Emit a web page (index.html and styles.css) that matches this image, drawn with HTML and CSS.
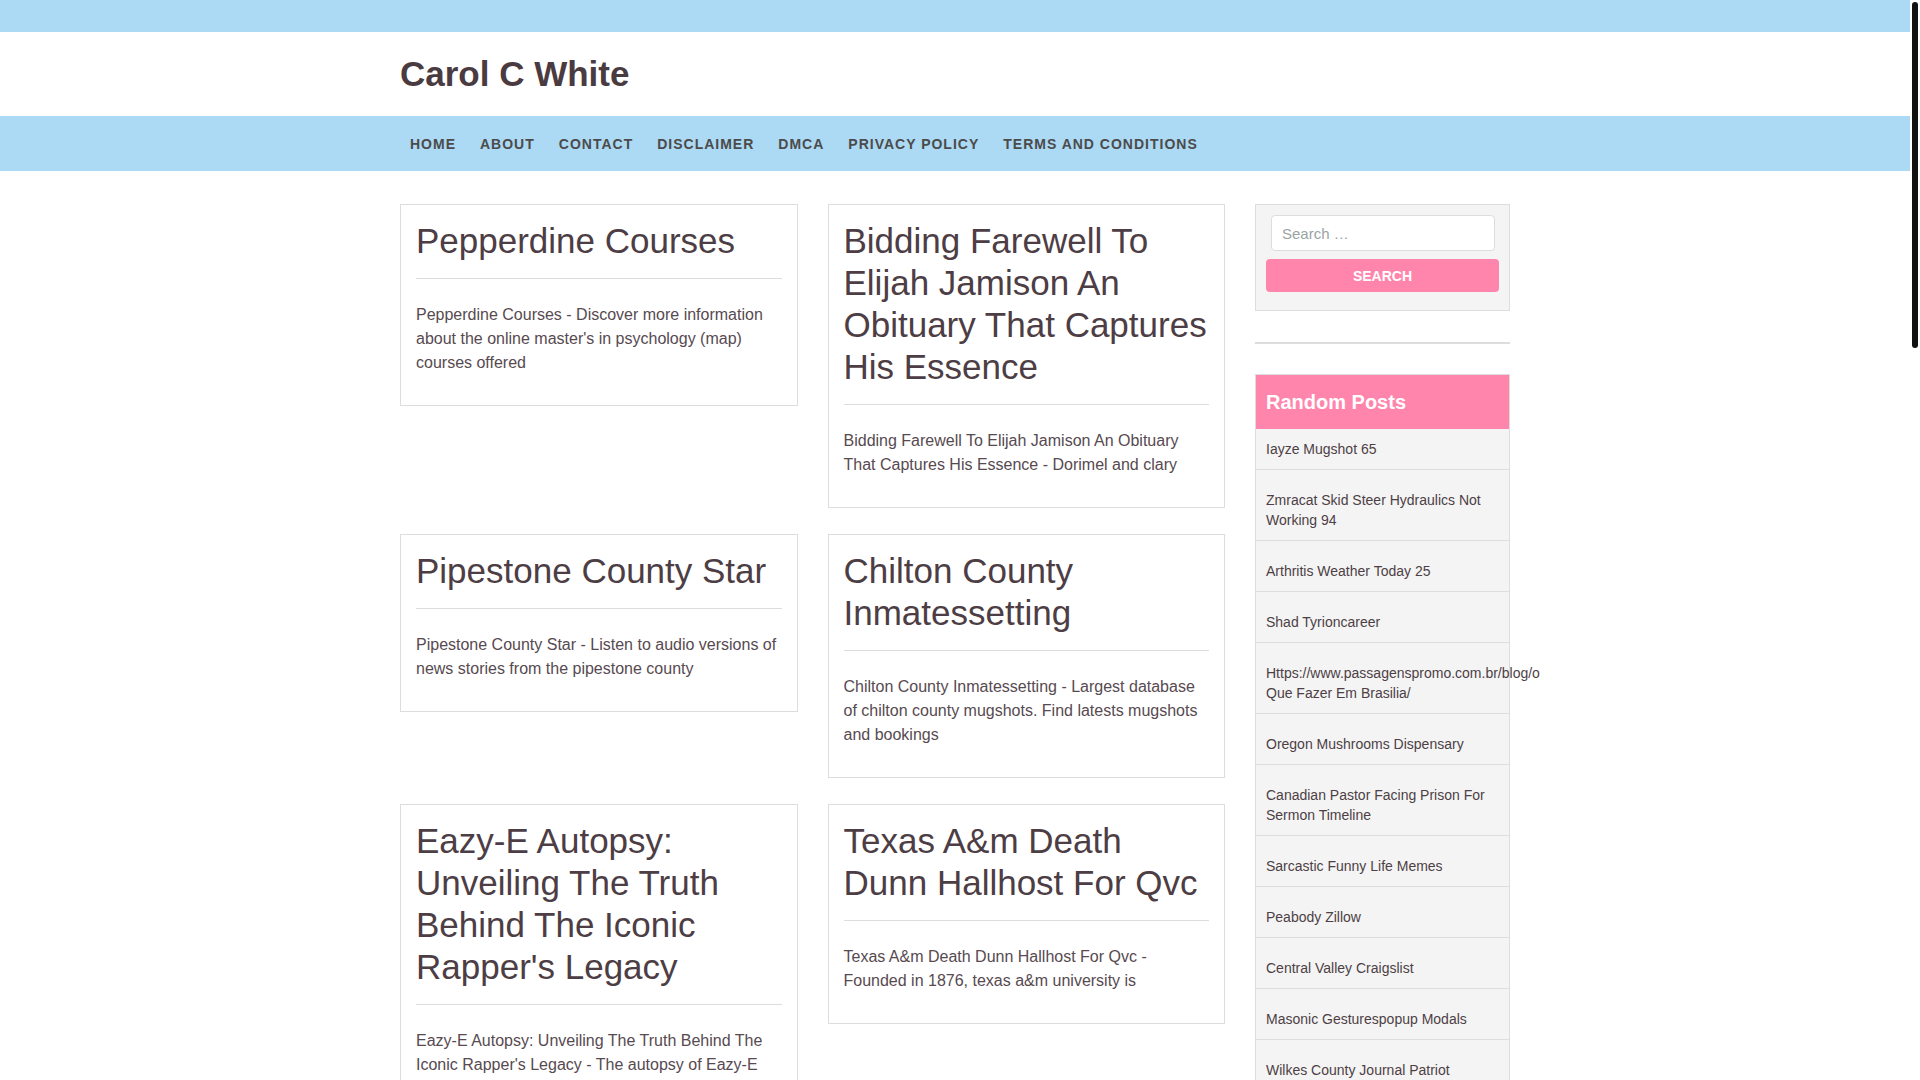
FILE: index.html
```html
<!DOCTYPE html>
<html lang="en">
<head>
<meta charset="utf-8">
<title>Carol C White</title>
<link rel="stylesheet" href="styles.css">
</head>
<body>
<div class="page">
<div class="topbar"></div>
<header class="site-header">
  <div class="container">
    <h1 class="site-title">Carol C White</h1>
  </div>
</header>
<nav class="main-nav">
  <div class="container">
    <ul class="menu">
      <li><a href="#">Home</a></li>
      <li><a href="#">About</a></li>
      <li><a href="#">Contact</a></li>
      <li><a href="#">Disclaimer</a></li>
      <li><a href="#">DMCA</a></li>
      <li><a href="#">Privacy Policy</a></li>
      <li><a href="#">Terms and Conditions</a></li>
    </ul>
  </div>
</nav>
<div class="site-content container">
  <main class="posts">
    <article class="card">
      <h2 class="card-title">Pepperdine Courses</h2>
      <hr class="card-sep">
      <p class="card-text">Pepperdine Courses - Discover more information about the online master's in psychology (map) courses offered</p>
    </article>
    <article class="card">
      <h2 class="card-title">Bidding Farewell To Elijah Jamison An Obituary That Captures His Essence</h2>
      <hr class="card-sep">
      <p class="card-text">Bidding Farewell To Elijah Jamison An Obituary That Captures His Essence - Dorimel and clary</p>
    </article>
    <article class="card">
      <h2 class="card-title">Pipestone County Star</h2>
      <hr class="card-sep">
      <p class="card-text">Pipestone County Star - Listen to audio versions of news stories from the pipestone county</p>
    </article>
    <article class="card">
      <h2 class="card-title">Chilton County Inmatessetting</h2>
      <hr class="card-sep">
      <p class="card-text">Chilton County Inmatessetting - Largest database of chilton county mugshots. Find latests mugshots and bookings</p>
    </article>
    <article class="card">
      <h2 class="card-title">Eazy-E Autopsy: Unveiling The Truth Behind The Iconic Rapper's Legacy</h2>
      <hr class="card-sep">
      <p class="card-text">Eazy-E Autopsy: Unveiling The Truth Behind The Iconic Rapper's Legacy - The autopsy of Eazy-E revealed the cause of his death</p>
    </article>
    <article class="card">
      <h2 class="card-title">Texas A&amp;m Death Dunn Hallhost For Qvc</h2>
      <hr class="card-sep">
      <p class="card-text">Texas A&amp;m Death Dunn Hallhost For Qvc - Founded in 1876, texas a&amp;m university is</p>
    </article>
  </main>
  <aside class="sidebar">
    <section class="widget search-widget">
      <form class="search-form">
        <input class="search-field" type="search" placeholder="Search …">
        <button class="search-submit" type="button">Search</button>
      </form>
    </section>
    <hr class="widget-sep">
    <section class="widget random-posts">
      <h3 class="widget-title">Random Posts</h3>
      <ul class="post-list">
        <li><a href="#">Iayze Mugshot 65</a></li>
        <li><a href="#">Zmracat Skid Steer Hydraulics Not Working 94</a></li>
        <li><a href="#">Arthritis Weather Today 25</a></li>
        <li><a href="#">Shad Tyrioncareer</a></li>
        <li><a href="#">Https://www.passagenspromo.com.br/blog/o Que Fazer Em Brasilia/</a></li>
        <li><a href="#">Oregon Mushrooms Dispensary</a></li>
        <li><a href="#">Canadian Pastor Facing Prison For Sermon Timeline</a></li>
        <li><a href="#">Sarcastic Funny Life Memes</a></li>
        <li><a href="#">Peabody Zillow</a></li>
        <li><a href="#">Central Valley Craigslist</a></li>
        <li><a href="#">Masonic Gesturespopup Modals</a></li>
        <li><a href="#">Wilkes County Journal Patriot</a></li>
      </ul>
    </section>
  </aside>
</div>
</div>
<div class="scroll-thumb"></div>
</body>
</html>
```

FILE: styles.css
```css
html, body {
  margin: 0;
  padding: 0;
}

body {
  font-family: "Liberation Sans", Arial, sans-serif;
  color: #574a50;
  background: #fff;
}

.page {
  margin-right: 10px;
}

.scroll-thumb {
  position: fixed;
  top: 2px;
  right: 2px;
  width: 6px;
  height: 346px;
  border-radius: 3px;
  background: #111;
}

.container {
  width: 1110px;
  margin: 0 auto;
}

.topbar {
  height: 32px;
  background: #acd9f4;
}

.site-header {
  height: 84px;
  display: flex;
  align-items: center;
}

.site-title {
  margin: 0;
  font-size: 35px;
  line-height: 40px;
  font-weight: 700;
  color: #4a3b41;
}

.main-nav {
  height: 55px;
  background: #acd9f4;
}

.menu {
  list-style: none;
  margin: 0 0 0 -2px;
  padding: 0;
  display: flex;
}

.menu a {
  display: block;
  padding: 0 12px;
  line-height: 56px;
  font-size: 14px;
  font-weight: 700;
  letter-spacing: 1px;
  text-transform: uppercase;
  color: #4b4b4b;
  text-decoration: none;
}

.site-content {
  display: flex;
  align-items: flex-start;
  gap: 30px;
  padding-top: 33px;
  padding-bottom: 40px;
}

.posts {
  width: 825px;
  display: grid;
  grid-template-columns: 1fr 1fr;
  column-gap: 30px;
  row-gap: 26px;
  align-items: start;
}

.card {
  border: 1px solid #ddd;
  padding: 15px;
  background: #fff;
}

.card-title {
  margin: 0;
  font-size: 35px;
  line-height: 42px;
  font-weight: 400;
  color: #4d3d44;
}

.card-sep {
  border: 0;
  border-top: 1px solid #ddd;
  margin: 16px 0 24px;
}

.card-text {
  margin: 0 0 15px;
  font-size: 16px;
  line-height: 24px;
}

.sidebar {
  width: 255px;
  flex: none;
}

.search-widget {
  border: 1px solid #ddd;
  background: #f4f4f4;
  padding: 10px 10px 18px;
}

.search-field {
  display: block;
  box-sizing: border-box;
  width: 224px;
  height: 36px;
  margin: 0 0 8px 5px;
  padding: 0 10px;
  border: 1px solid #ddd;
  border-radius: 4px;
  background: #fff;
  font-family: "Liberation Sans", Arial, sans-serif;
  font-size: 15px;
  color: #555;
  outline: none;
}

.search-field::placeholder {
  color: #9aa4a4;
}

.search-submit {
  display: block;
  width: 100%;
  height: 33px;
  border: 0;
  border-radius: 4px;
  background: #ff85ad;
  color: #fff;
  font-family: "Liberation Sans", Arial, sans-serif;
  font-size: 14px;
  font-weight: 700;
  text-transform: uppercase;
  padding: 0;
}

.widget-sep {
  border: 0;
  height: 2px;
  background: #ddd;
  margin: 31px 0 30px;
}

.random-posts {
  border: 1px solid #ddd;
}

.widget-title {
  margin: 0;
  height: 54px;
  line-height: 54px;
  padding: 0 10px;
  background: #ff85ad;
  color: #fff;
  font-size: 20px;
  font-weight: 700;
}

.post-list {
  list-style: none;
  margin: 0;
  padding: 0;
}

.post-list li {
  padding: 20px 10px 10px;
  background: #f4f4f4;
  border-bottom: 1px solid #ddd;
  font-size: 14px;
  line-height: 20px;
}

.post-list li:first-child {
  padding-top: 10px;
}

.post-list a {
  color: #4d3f45;
  text-decoration: none;
}
```
